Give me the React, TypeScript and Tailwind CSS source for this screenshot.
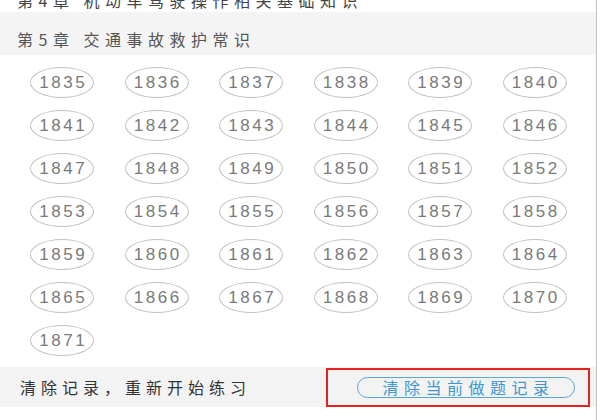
import React from "react";

const cjk = { fontFamily: '"Noto Sans CJK SC", "Noto Sans", sans-serif' };
const num = { fontFamily: '"Liberation Sans", Arial, sans-serif' };

export default function App() {
  const nums: number[] = [];
  for (let i = 1835; i <= 1871; i++) nums.push(i);
  return (
    <div className="w-[600px] h-[420px] bg-white overflow-hidden flex">
      <div className="w-[597px] h-[420px] border-r border-[#c4c4c4] flex flex-col">
        <div className="h-[12px] overflow-hidden bg-white">
          <div
            className="-mt-[10px] pl-[17px] text-[16px] leading-[20px] tracking-[5.5px] text-[#444] whitespace-nowrap"
            style={cjk}
          >
            第4章 机动车驾驶操作相关基础知识
          </div>
        </div>
        <div className="h-[43px] bg-[#f4f4f4] pl-[17px] pt-[18px]">
          <div
            className="text-[16px] leading-[18px] tracking-[5.5px] text-[#555] whitespace-nowrap"
            style={cjk}
          >
            第5章 交通事故救护常识
          </div>
        </div>
        <div className="h-[312px] pl-[15px] pt-[12px]">
          <div className="w-[567px] grid grid-cols-6 gap-y-[12px]">
            {nums.map((n) => (
              <div key={n} className="flex justify-center">
                <div
                  className="w-[64px] h-[31px] rounded-[50%] border border-[#c2c2c2] flex items-center justify-center text-[17px] tracking-[2.5px] pl-[2px] text-[#7a7a7a]"
                  style={num}
                >
                  {n}
                </div>
              </div>
            ))}
          </div>
        </div>
        <div className="h-[40px] bg-[#f2f3f2] flex items-center">
          <div
            className="pl-[20px] w-[326px] text-[16px] tracking-[5px] text-[#333] whitespace-nowrap"
            style={cjk}
          >
            清除记录，重新开始练习
          </div>
          <div className="w-[264px] h-[39px] border-[2.5px] border-[#e0241f] flex items-center pl-[29px]">
            <div
              className="w-[218px] h-[21px] rounded-full border border-[#5aa6d6] flex items-center justify-center text-[16px] leading-[18px] tracking-[5.5px] pl-[5px] text-[#3f97d2] whitespace-nowrap"
              style={cjk}
            >
              清除当前做题记录
            </div>
          </div>
        </div>
        <div className="flex-1 bg-white" />
      </div>
    </div>
  );
}
